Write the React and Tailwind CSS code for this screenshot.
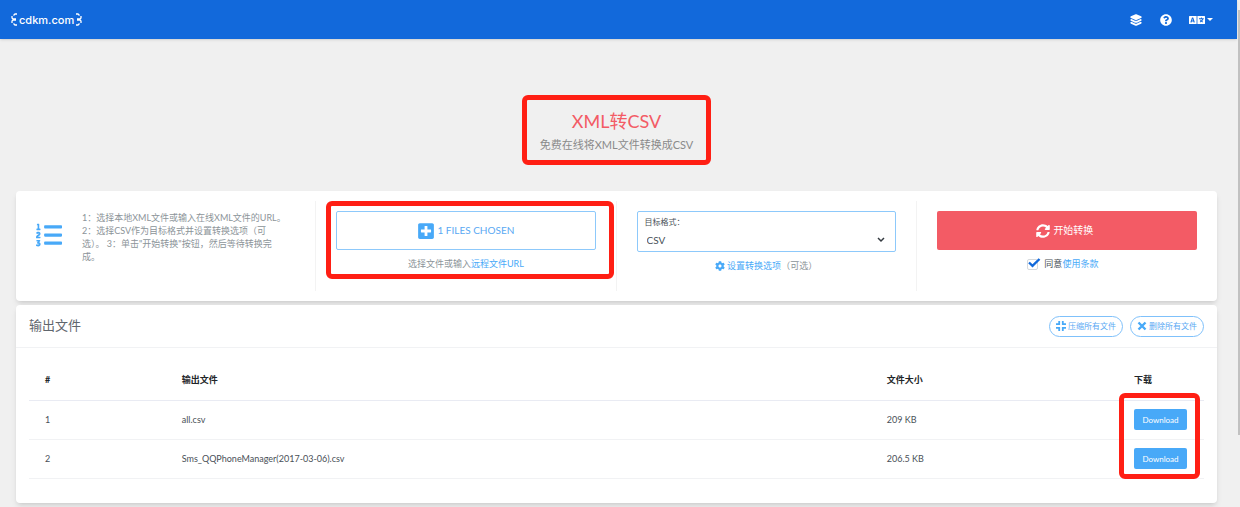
import React from "react";
import { FaLanguage, FaQuestionCircle, FaPlusSquare, FaSyncAlt, FaCog, FaListOl } from "react-icons/fa";
import { IoLayers } from "react-icons/io5";

const files = [
  { id: 1, name: "all.csv", size: "209 KB" },
  { id: 2, name: "Sms_QQPhoneManager(2017-03-06).csv", size: "206.5 KB" },
];

const frame = "pointer-events-none absolute rounded-md border-5 border-[#ff1f14]";
const pill =
  "flex h-[21px] items-center gap-[2px] rounded-full border border-[#7fc1fb] px-[6px] text-[8px] leading-none text-[#5aa9f3]";
const column = "border-[#f3f3f3] px-5 not-last:border-r";

function Logo() {
  return (
    <a href="#home" aria-label="cdkm.com" className="flex items-center gap-px text-white">
      <svg viewBox="0 0 7 13" className="h-[13px] w-[7px]" fill="none" stroke="currentColor" strokeWidth="1.3">
        <path d="M6 1H4L2.5 2.5M6 12H4L2.5 10.5M1 3v2l1 1h3M1 10V8l1-1h3" />
      </svg>
      <span className="font-[Inter] text-[11px] leading-4 font-medium">cdkm.com</span>
      <svg viewBox="0 0 7 13" className="h-[13px] w-[7px]" fill="none" stroke="currentColor" strokeWidth="1.3">
        <path d="M1 1h2l1.500 1.500M1 12h2l1.500-1.500M6 3v2L5 6H2M6 10V8L5 7H2" />
      </svg>
    </a>
  );
}

function CompressIcon() {
  return (
    <svg viewBox="0 0 10 10" className="size-[10px]" fill="none" stroke="#48a9f8" strokeWidth="1.8">
      <path d="M3.200 0v3.200H0M6.800 0v3.200H10M3.200 10V6.800H0M6.800 10V6.800H10" />
    </svg>
  );
}

function CrossIcon() {
  return (
    <svg viewBox="0 0 10 10" className="size-[10px]" fill="none" stroke="#48a9f8" strokeWidth="2.4">
      <path d="M1.500 1.500l7 7M8.500 1.500l-7 7" />
    </svg>
  );
}

function Header() {
  return (
    <header className="flex h-[39px] items-center justify-between bg-[#1269db] pr-6 pl-[11px] text-white shadow">
      <Logo />
      <nav className="flex items-center gap-[17px]">
        <a href="#formats" aria-label="格式"><IoLayers className="size-[14px]" /></a>
        <a href="#help" aria-label="帮助"><FaQuestionCircle className="size-3" /></a>
        <button type="button" aria-label="语言" className="flex items-center gap-[2px]">
          <FaLanguage className="size-4" />
          <svg viewBox="0 0 6 3" className="h-[3px] w-[6px]" fill="currentColor"><path d="M0 0h6L3 3z" /></svg>
        </button>
      </nav>
    </header>
  );
}

export default function App() {
  return (
    <div className="flex bg-[#f0f0f0] font-[Lato,'Noto_Sans_CJK_SC',sans-serif] text-[#495057]">
      <div className="min-w-0 flex-1">
        <Header />
        <main className="pr-5 pb-[5px] pl-4">
          <div className="flex justify-center pt-14 pb-[26px]">
            <div className="relative px-[18px] pt-[14px] pb-3 text-center">
              <h1 className="text-[18px] leading-6 text-[#f35b65]">XML转CSV</h1>
              <p className="mt-1 text-[11px] leading-4 text-[#8a8a8a]">免费在线将XML文件转换成CSV</p>
              <div className={`${frame} inset-0`} />
            </div>
          </div>

          <section className="grid grid-cols-4 rounded bg-white py-[10px] shadow-md">
            <div className={`${column} flex min-h-[90px] gap-5 pt-[10px]`}>
              <FaListOl className="mt-[11px] size-[26px] shrink-0 text-[#48a9f8]" />
              <p className="text-[9px] leading-[13px] text-[#8c9499]">
                1：选择本地XML文件或输入在线XML文件的URL。<br />
                2：选择CSV作为目标格式并设置转换选项（可<br />
                选）。 3：单击"开始转换"按钮，然后等待转换完<br />
                成。
              </p>
            </div>

            <div className={`${column} relative pt-[10px] text-center`}>
              <button type="button" className="flex h-[39px] w-full items-center justify-center gap-[2px] rounded-xs border border-[#8dc9fb] text-[10px] text-[#5aa9f3]">
                <FaPlusSquare className="size-[18px] text-[#48a9f8]" />1 FILES CHOSEN
              </button>
              <p className="mt-2 text-[9px] leading-3 text-[#8c9499]">
                选择文件或输入<a href="#url" className="text-[#48a9f8]">远程文件URL</a>
              </p>
              <div className={`${frame} top-0 right-[2px] bottom-3 left-[10px]`} />
            </div>

            <div className={`${column} pt-[10px] text-center`}>
              <div className="relative rounded-xs border border-[#8dc9fb] text-left">
                <label htmlFor="format" className="block px-[7px] pt-1 text-[8px] leading-3">目标格式：</label>
                <select id="format" defaultValue="CSV" className="block h-[23px] w-full appearance-none px-[9px] text-[10px] leading-4 outline-none">
                  <option>CSV</option>
                </select>
                <svg viewBox="0 0 8 6" className="pointer-events-none absolute right-[10px] bottom-2 h-[6px] w-2" fill="none" stroke="#343a40" strokeWidth="1.5">
                  <path d="M1 1l3 3 3-3" />
                </svg>
              </div>
              <p className="mt-2 flex items-center justify-center text-[9px] leading-3 text-[#8c9499]">
                <a href="#options" className="flex items-center gap-[2px] text-[#48a9f8]"><FaCog className="size-[10px]" />设置转换选项</a>（可选）
              </p>
            </div>

            <div className={`${column} pt-[10px] text-center`}>
              <button type="button" className="flex h-[39px] w-full items-center justify-center gap-[3px] rounded-xs bg-[#f35b65] pr-1 text-[10px] text-white">
                <FaSyncAlt className="size-[14px]" />开始转换
              </button>
              <div className="mt-2 flex items-center justify-center gap-[6px] pr-2 text-[9px] leading-3">
                <span className="relative flex">
                  <input id="agree" type="checkbox" defaultChecked className="size-[11px] appearance-none rounded-xs border border-[#d5d9dd] bg-white" />
                  <svg viewBox="0 0 13 10" className="pointer-events-none absolute -top-px left-px h-[10px] w-[13px]" fill="none" stroke="#1269db" strokeWidth="2.4">
                    <path d="M1 4.5l3.5 3.3L11.5 1" />
                  </svg>
                </span>
                <span><label htmlFor="agree">同意</label><a href="#terms" className="text-[#48a9f8]">使用条款</a></span>
              </div>
            </div>
          </section>

          <section className="mt-1 rounded bg-white pb-6 shadow-md">
            <div className="flex h-[43px] items-center justify-between border-b border-[#f1f2f4] px-[13px]">
              <h2 className="text-[13px] text-[#5f666d]">输出文件</h2>
              <div className="flex gap-[7px]">
                <button type="button" className={pill}><CompressIcon />压缩所有文件</button>
                <button type="button" className={pill}><CrossIcon />删除所有文件</button>
              </div>
            </div>
            <div className="px-[13px] pt-[13px]">
              <table className="w-full table-fixed text-left text-[9px] leading-3">
                <thead>
                  <tr className="h-[39px] border-b border-[#e9ebf3] text-[#212529]">
                    <th className="w-[13%] pl-4">#</th>
                    <th className="w-[60%]">输出文件</th>
                    <th>文件大小</th>
                    <th className="w-[70px]">下载</th>
                  </tr>
                </thead>
                <tbody>
                  {files.map((file, index) => (
                    <tr key={file.id} className="h-[39px] border-b border-[#f1f2f4]">
                      <td className="pl-4">{file.id}</td>
                      <td>{file.name}</td>
                      <td>{file.size}</td>
                      <td className="relative">
                        <button type="button" className="h-[21px] w-[53px] rounded-xs bg-[#48a9f8] text-[8px] text-white">Download</button>
                        {index === 0 && <div className={`${frame} -top-2 right-1 -bottom-10 -left-[15px]`} />}
                      </td>
                    </tr>
                  ))}
                </tbody>
              </table>
            </div>
          </section>
        </main>
      </div>
      <div className="w-[3px] pt-[10px]"><div className="ml-px h-[425px] w-[2px] bg-[#c1c1c1]" /></div>
    </div>
  );
}
